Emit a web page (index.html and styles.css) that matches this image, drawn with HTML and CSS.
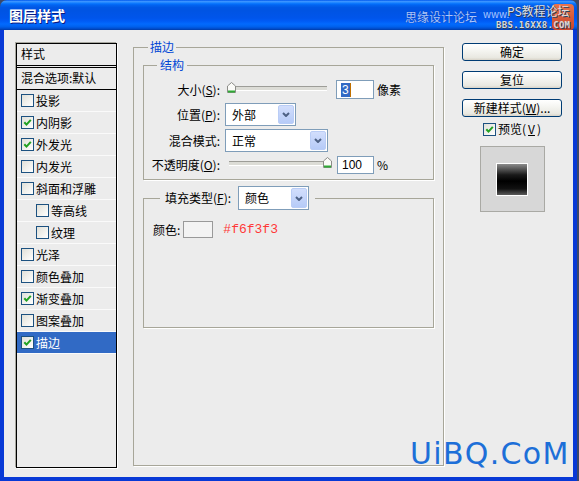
FILE: index.html
```html
<!DOCTYPE html>
<html lang="zh-CN">
<head>
  <meta charset="UTF-8">
  <title>图层样式</title>
  <link rel="stylesheet" href="styles.css">
</head>
<body>
  <div class="window">
    <div class="titlebar">
      <span class="title">图层样式</span>
      <div class="brand">
        <span class="brand-logo"></span>
        <span class="brand-sy">思缘设计论坛</span>
        <span class="brand-www">www.</span>
        <span class="brand-ps">PS教程论坛</span>
        <span class="brand-bbs">BBS.16XX8.COM</span>
      </div>
    </div>

    <div class="dialog">
      <div class="style-list">
        <div class="list-head">样式</div>
        <div class="list-blend">混合选项:默认</div>
        <div class="item"><span class="cb"></span>投影</div>
        <div class="item"><span class="cb"><svg viewBox="0 0 11 11"><path d="M2.3 5.2 L4.5 7.6 L8.8 2.8"/></svg></span>内阴影</div>
        <div class="item"><span class="cb"><svg viewBox="0 0 11 11"><path d="M2.3 5.2 L4.5 7.6 L8.8 2.8"/></svg></span>外发光</div>
        <div class="item"><span class="cb"></span>内发光</div>
        <div class="item"><span class="cb"></span>斜面和浮雕</div>
        <div class="item sub"><span class="cb"></span>等高线</div>
        <div class="item sub"><span class="cb"></span>纹理</div>
        <div class="item"><span class="cb"></span>光泽</div>
        <div class="item"><span class="cb"></span>颜色叠加</div>
        <div class="item"><span class="cb"><svg viewBox="0 0 11 11"><path d="M2.3 5.2 L4.5 7.6 L8.8 2.8"/></svg></span>渐变叠加</div>
        <div class="item"><span class="cb"></span>图案叠加</div>
        <div class="item active"><span class="cb"><svg viewBox="0 0 11 11"><path d="M2.3 5.2 L4.5 7.6 L8.8 2.8"/></svg></span>描边</div>
      </div>

      <fieldset class="group outer">
        <legend>描边</legend>

        <fieldset class="group struct">
          <legend>结构</legend>
          <div class="row">
            <span class="lbl">大小(<u>S</u>):</span>
            <div class="slider size-slider">
              <svg class="thumb thumb-left" viewBox="0 0 9 11"><path d="M0.5 4 L4.5 0.5 L8.5 4 V10.5 H0.5 Z" fill="#fbfbf8" stroke="#8c8c88"/><path d="M1 9.5 H8" stroke="#2faa35" stroke-width="2"/></svg>
            </div>
            <span class="field size-field"><span class="sel">3</span><span class="caret"></span></span>
            <span class="unit">像素</span>
          </div>
          <div class="row row-select pos-row">
            <span class="lbl">位置(<u>P</u>):</span>
            <span class="select pos-select"><span class="val">外部</span><span class="arrow"><svg viewBox="0 0 8 5"><path d="M1 1 L4 4 L7 1"/></svg></span></span>
          </div>
          <div class="row row-select mode-row">
            <span class="lbl">混合模式:</span>
            <span class="select mode-select"><span class="val">正常</span><span class="arrow"><svg viewBox="0 0 8 5"><path d="M1 1 L4 4 L7 1"/></svg></span></span>
          </div>
          <div class="row opacity-row">
            <span class="lbl">不透明度(<u>O</u>):</span>
            <div class="slider opacity-slider">
              <svg class="thumb thumb-right" viewBox="0 0 9 11"><path d="M0.5 4 L4.5 0.5 L8.5 4 V10.5 H0.5 Z" fill="#fbfbf8" stroke="#8c8c88"/><path d="M1 9.5 H8" stroke="#2faa35" stroke-width="2"/></svg>
            </div>
            <span class="field opacity-field">100</span>
            <span class="unit">%</span>
          </div>
        </fieldset>

        <fieldset class="group fill">
          <legend class="fill-legend">
            <span class="fill-label">填充类型(<u>F</u>):</span>
            <span class="select fill-select"><span class="val">颜色</span><span class="arrow"><svg viewBox="0 0 8 5"><path d="M1 1 L4 4 L7 1"/></svg></span></span>
          </legend>
          <div class="color-row">
            <span>颜色:</span>
            <span class="swatch"></span>
            <span class="hex">#f6f3f3</span>
          </div>
        </fieldset>
      </fieldset>

      <div class="actions">
        <button class="btn">确定</button>
        <button class="btn">复位</button>
        <button class="btn">新建样式(<u>W</u>)...</button>
        <div class="preview-check"><span class="cb"><svg viewBox="0 0 11 11"><path d="M2.3 5.2 L4.5 7.6 L8.8 2.8"/></svg></span>预览(<u>V</u>)</div>
        <div class="preview"><div class="preview-swatch"></div></div>
      </div>
    </div>

    <div class="uibq">UiBQ.CoM</div>
  </div>
</body>
</html>
```

FILE: styles.css
```css
* {
  box-sizing: border-box;
}
body {
  margin: 0;
  background: #3b4869;
  font: 12px/16px "Noto Sans CJK SC", "Liberation Sans", sans-serif;
  color: #000;
}
.window {
  position: relative;
  width: 577px;
  height: 481px;
  display: flex;
  flex-direction: column;
}

/* title bar */
.titlebar {
  position: relative;
  height: 30px;
  flex: none;
  display: flex;
  align-items: center;
  padding-left: 9px;
  border-radius: 7px 7px 0 0;
  background: linear-gradient(#0058ee 0%, #3a93ff 5%, #1f86ff 9%, #036ffc 13%, #0262ee 18%, #0057e5 25%, #0054e3 35%, #0055eb 60%, #005bf5 70%, #026afe 80%, #0062ef 88%, #0052d6 94%, #003ba8 100%);
}
.title {
  color: #fff;
  font-weight: bold;
  font-size: 14px;
  text-shadow: 1px 1px 0 #0a1a80;
}
.brand {
  position: absolute;
  left: 400px;
  top: 0;
  width: 177px;
  height: 30px;
}
.brand span {
  position: absolute;
  white-space: nowrap;
}
.brand-logo {
  left: 152px;
  top: 4px;
  width: 22px;
  height: 26px;
  border-radius: 4px;
  background: linear-gradient(#e8734c, #c9442a);
}
.brand-sy {
  left: 5px;
  top: 9px;
  font-size: 12px;
  line-height: 16px;
  color: #a9c6ff;
  text-shadow: 0 0 1px #062a8c;
}
.brand-www {
  left: 83px;
  top: 8px;
  font-size: 10px;
  line-height: 11px;
  color: #a9c6ff;
}
.brand-ps {
  left: 107px;
  top: 4px;
  font-size: 12px;
  line-height: 14px;
  color: #dcdcdc;
  text-shadow: 1px 1px 0 #30405a;
}
.brand-bbs {
  left: 96px;
  top: 20px;
  font: bold 9px/10px "DejaVu Sans Mono", monospace;
  letter-spacing: 0.3px;
  color: #d8d8d8;
  text-shadow: 1px 1px 0 #30405a;
}

/* dialog body */
.dialog {
  flex: 1;
  display: flex;
  align-items: flex-start;
  padding: 9px 0 0 12px;
  background: #ececec;
  border: 4px solid #0839d6;
  border-top: 0;
}

/* style list */
.style-list {
  width: 101px;
  height: 425px;
  margin-top: 4px;
  flex: none;
  border: 1px solid #000;
  box-shadow: -1px -1px 0 #a8a8a0, 1px 1px 0 #fff;
}
.list-head {
  height: 24px;
  padding: 2px 0 0 4px;
  border-bottom: 3px double #000;
}
.list-blend {
  height: 22px;
  padding: 2px 0 0 4px;
  border-bottom: 1px solid #000;
}
.item {
  height: 22px;
  display: flex;
  align-items: center;
  gap: 2px;
  padding-left: 4px;
  border-bottom: 1px solid #fafafa;
}
.item.sub {
  padding-left: 19px;
}
.item.active {
  background: #316ac5;
  color: #fff;
}
.cb {
  width: 13px;
  height: 13px;
  flex: none;
  display: inline-flex;
  border: 1px solid #1c5180;
  background: linear-gradient(135deg, #e0e0d8, #fff);
}
.cb svg {
  width: 11px;
  height: 11px;
}
.cb path {
  fill: none;
  stroke: #21a121;
  stroke-width: 2;
}

/* group boxes */
.group {
  margin: 0;
  border: 1px solid #a7a699;
  box-shadow: 1px 1px 0 #fff;
}
.group legend {
  color: #0046d5;
  line-height: 16px;
}
.outer {
  width: 311px;
  height: 427px;
  margin-left: 16px;
  padding: 2px 9px 0;
}
.outer > legend {
  margin-left: 5px;
  padding: 0 2px;
}
.struct {
  padding: 7px 0 5px;
}
.struct > legend {
  margin-left: 13px;
  padding: 0 3px;
}
.row {
  height: 19px;
  display: flex;
  align-items: center;
}
.row-select {
  height: 23px;
}
.pos-row {
  margin-top: 4px;
}
.mode-row,
.opacity-row {
  margin-top: 3px;
}
.lbl {
  width: 76px;
  flex: none;
  text-align: right;
  white-space: nowrap;
}
.slider {
  position: relative;
  height: 13px;
  flex: none;
}
.slider::before {
  content: "";
  position: absolute;
  left: 0;
  right: 0;
  top: 5px;
  height: 3px;
  background: #dcdcd6;
  border-top: 1px solid #9d9d98;
  border-bottom: 1px solid #fff;
}
.size-slider {
  width: 100px;
  margin-left: 7px;
  margin-top: -4px;
}
.opacity-slider {
  width: 103px;
  margin-left: 9px;
  margin-top: -4px;
}
.thumb {
  position: absolute;
  top: 1px;
  width: 9px;
  height: 11px;
}
.thumb-left {
  left: 0;
}
.thumb-right {
  right: 0;
}
.field {
  height: 19px;
  display: flex;
  align-items: center;
  padding-left: 4px;
  background: #fff;
  border: 1px solid #7f9db9;
  font-family: "Liberation Sans", sans-serif;
}
.size-field {
  width: 38px;
  margin-left: 9px;
}
.opacity-field {
  width: 37px;
  margin-left: 5px;
  height: 18px;
}
.sel {
  background: #316ac5;
  color: #fff;
  line-height: 14px;
  padding: 0 1px;
}
.caret {
  width: 1px;
  height: 14px;
  background: #c07000;
}
.unit {
  margin-left: 3px;
}

/* dropdowns */
.select {
  height: 23px;
  display: flex;
  padding: 1px;
  background: #fff;
  border: 1px solid #7f9db9;
}
.select .val {
  flex: 1;
  padding-left: 5px;
  line-height: 19px;
  color: #000;
}
.select .arrow {
  width: 16px;
  display: flex;
  align-items: center;
  justify-content: center;
  border: 1px solid #bacdf6;
  border-radius: 2px;
  background: linear-gradient(#d2defc, #b6cbf8);
}
.select .arrow svg {
  width: 8px;
  height: 5px;
}
.select .arrow path {
  fill: none;
  stroke: #4d6185;
  stroke-width: 2;
}
.pos-select {
  width: 71px;
  margin-left: 5px;
}
.mode-select {
  width: 103px;
  margin-left: 5px;
}

/* fill group */
.fill {
  margin-top: 6px;
  padding: 11px 0 89px 9px;
}
.fill-legend {
  display: flex;
  align-items: center;
  margin-left: 7px;
  padding: 0 6px 0 5px;
}
.fill-label {
  width: 68px;
  color: #000;
  white-space: nowrap;
}
.fill-select {
  width: 71px;
  height: 24px;
  margin-left: 5px;
}
.color-row {
  height: 17px;
  display: flex;
  align-items: center;
}
.swatch {
  width: 30px;
  height: 17px;
  margin-left: 3px;
  background: #f3f3f3;
  border: 1px solid #999;
}
.hex {
  margin-left: 10px;
  color: #ff3838;
  font: 13px/17px "Liberation Mono", monospace;
}

/* right column */
.actions {
  width: 100px;
  margin: 4px 0 0 18px;
  display: flex;
  flex-direction: column;
  align-items: center;
}
.btn {
  width: 100px;
  height: 18px;
  margin-bottom: 10px;
  padding: 0;
  font: 12px/14px "Noto Sans CJK SC", sans-serif;
  color: #000;
  border: 1px solid #003c74;
  border-radius: 3px;
  background: linear-gradient(#fff, #f4f4f0 45%, #e9e8e1 85%, #d8d3c8);
}
.actions .btn:nth-child(3) {
  margin-bottom: 0;
}
.preview-check {
  height: 16px;
  margin-top: 4px;
  display: flex;
  align-items: center;
  gap: 2px;
}
.preview {
  width: 65px;
  height: 66px;
  margin-top: 9px;
  display: flex;
  align-items: center;
  justify-content: center;
  background: #d7d7d7;
  border: 1px solid #a9a9a4;
}
.preview-swatch {
  width: 32px;
  height: 33px;
  border: 1px solid #fff;
  background: linear-gradient(#8c8c8c, #1a1a1a 35%, #000 55%, #111 80%, #5a5a5a);
}

/* watermark */
.uibq {
  position: absolute;
  left: 410px;
  top: 439px;
  font: 30px/30px "DejaVu Sans", sans-serif;
  letter-spacing: 1.3px;
  color: #1d6fd8;
}
```
